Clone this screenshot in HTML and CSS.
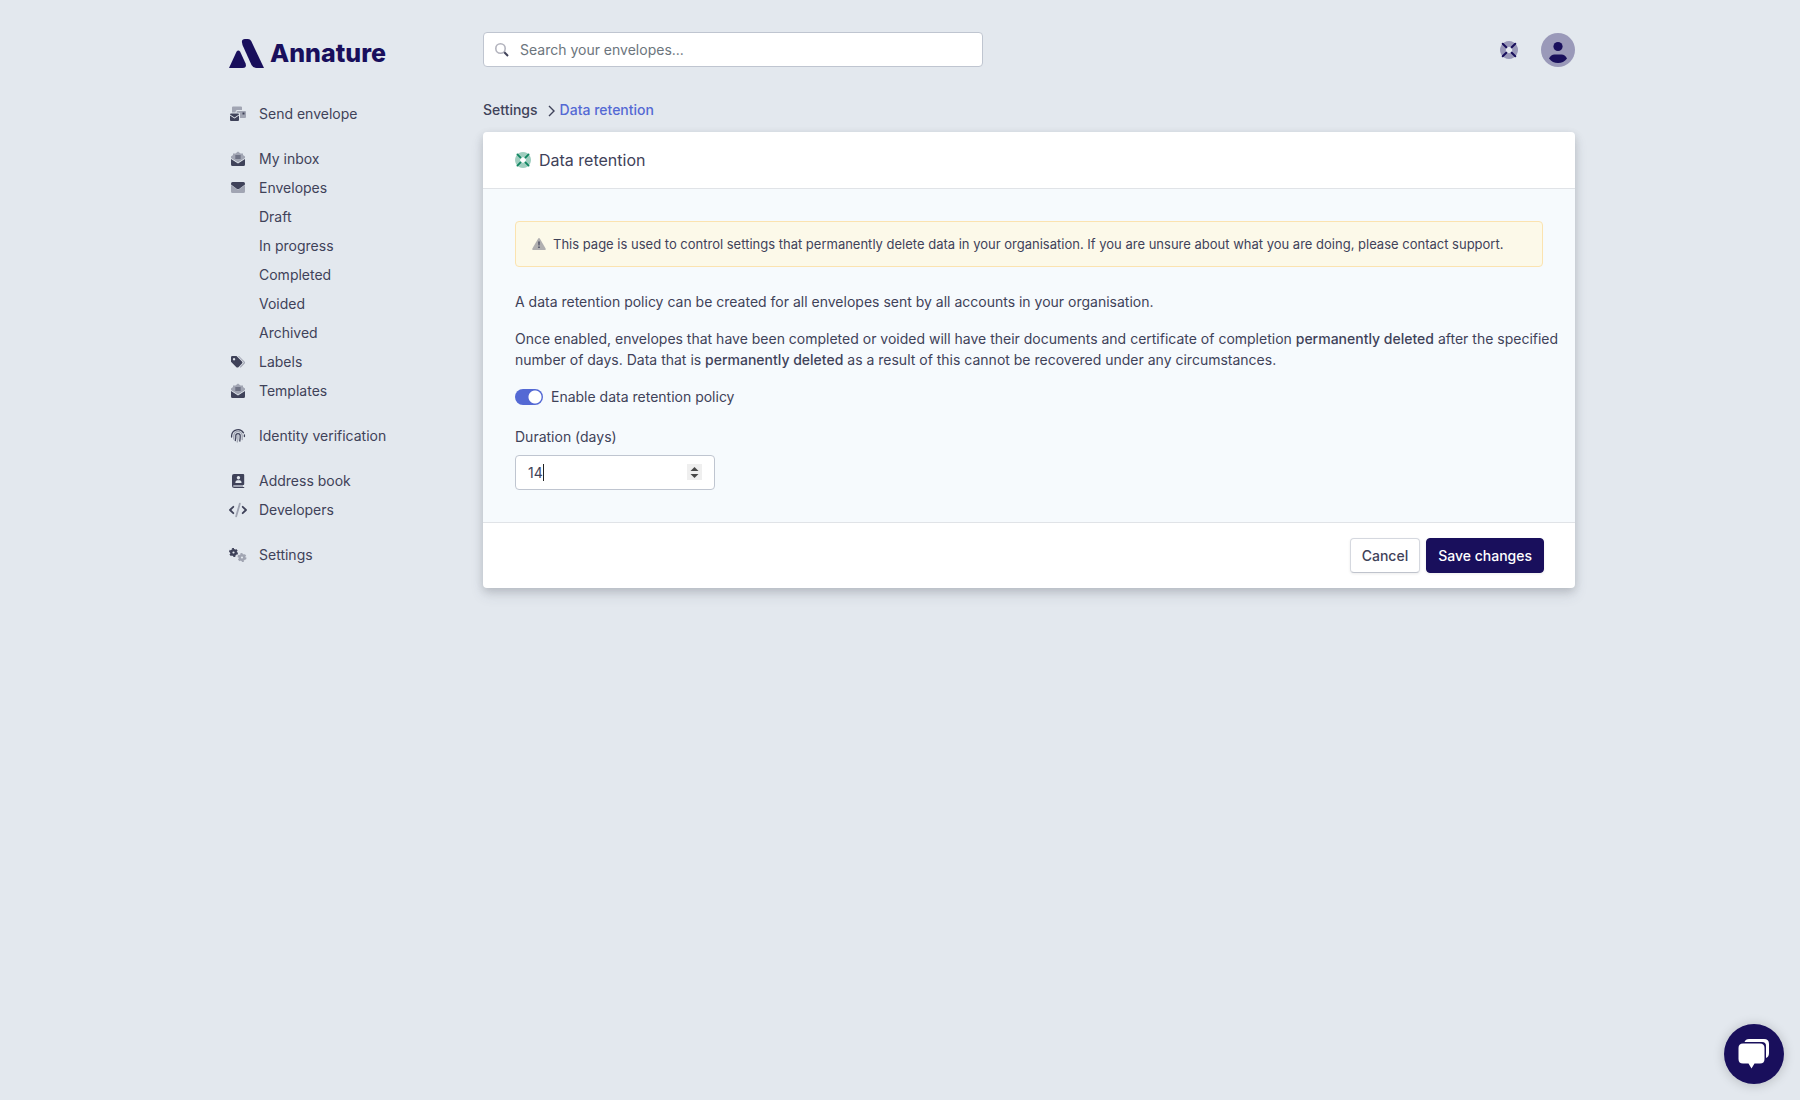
FILE: index.html
```html
<!DOCTYPE html>
<html lang="en">

<head>
    <meta charset="utf-8">
    <title>Data retention - Annature</title>
    <link rel="stylesheet" href="styles.css">
</head>

<body>
    <div class="container">
        <aside class="sidebar">
            <a class="logo" href="#">
                <svg class="logo-mark" viewBox="0 0 35 29" aria-hidden="true">
                    <path d="M13 3.500Q12.400 0 16 0H19Q21.200 0 22.200 2L35 29H27.500Q24 29 22.500 26L13.500 6Z" />
                    <path d="M0 29L7.500 12.800Q9.300 10 11.200 12.800L16.600 24.500Q18 29 13.500 29Z" />
                </svg>
                <span>Annature</span>
            </a>
            <nav>
                <ul class="nav">
                    <li class="gap"><a href="#">
                        <svg class="icon" viewBox="0 0 18 16" aria-hidden="true">
                            <path class="soft" d="M3 1.500Q3 .5 4 .5H12Q13 .5 13 1.500V4H8Q6.500 4 6.500 6.500H3Z" />
                            <path class="soft" d="M8.500 5H16Q17 5 17 6V11Q17 12 16 12H11V8Q11 6.800 10 6.800H7.500V6Q7.500 5 8.500 5Z" />
                            <path d="M13.500 6.500h2v2h-2z" />
                            <path d="M2 7.500H9Q10 7.500 10 8.500L5.500 11.500L1 8.500Q1 7.500 2 7.500ZM1 9.600L5.500 12.600L10 9.600V14Q10 15 9 15H2Q1 15 1 14Z" />
                        </svg>Send envelope</a></li>
                    <li><a href="#">
                        <svg class="icon" viewBox="0 0 18 16" aria-hidden="true">
                            <path class="soft" d="M4 2.500H6.500L9 .5L11.500 2.500H14V4L16 5.500V7L9 11.500L2 7V5.500L4 4Z" />
                            <path d="M6.300 4.500h5.400v1H6.300zM6.300 6.500h5.400v1H6.300zM2 8L9 12.500L16 8V13.500Q16 15 14.500 15H3.500Q2 15 2 13.500Z" />
                        </svg>My inbox</a></li>
                    <li><a href="#">
                        <svg class="icon" viewBox="0 0 18 16" aria-hidden="true">
                            <path class="soft" d="M2 5L9 10L16 5V11.500Q16 13 14.500 13H3.500Q2 13 2 11.500Z" />
                            <path d="M3.500 2H14.500Q16 2 16 3.500V4.500L10 9Q9 9.600 8 9L2 4.500V3.500Q2 2 3.500 2Z" />
                        </svg>Envelopes</a></li>
                    <li class="sub"><a href="#">Draft</a></li>
                    <li class="sub"><a href="#">In progress</a></li>
                    <li class="sub"><a href="#">Completed</a></li>
                    <li class="sub"><a href="#">Voided</a></li>
                    <li class="sub"><a href="#">Archived</a></li>
                    <li><a href="#">
                        <svg class="icon" viewBox="0 0 18 16" aria-hidden="true">
                            <path class="soft" d="M9 2H10L15.700 7.700Q16.500 8.600 15.700 9.500L11.500 13.700L10.800 13L14.500 9Q15 8.500 14.500 8Z" />
                            <path fill-rule="evenodd" d="M2 3.300Q2 2 3.300 2H7.500L13 7.500Q14 8.600 13 9.600L9.400 13.200Q8.400 14 7.400 13.200L2 7.800ZM5 4a1.200 1.200 0 1 0 .1 0z" />
                        </svg>Labels</a></li>
                    <li class="gap"><a href="#">
                        <svg class="icon" viewBox="0 0 18 16" aria-hidden="true">
                            <path class="soft" d="M4 2.500H6.500L9 .5L11.500 2.500H14V4L16 5.500V7L9 11.500L2 7V5.500L4 4Z" />
                            <path d="M6.300 4.500h5.400v1H6.300zM6.300 6.500h5.400v1H6.300zM2 8L9 12.500L16 8V13.500Q16 15 14.500 15H3.500Q2 15 2 13.500Z" />
                        </svg>Templates</a></li>
                    <li class="gap"><a href="#">
                        <svg class="icon line" viewBox="0 0 18 16" aria-hidden="true">
                            <path d="M2.600 9V7.500A6.400 6.400 0 0 1 14.500 4.800M15.400 6.800V8.500" />
                            <path class="soft" d="M4.800 11V7.500A4.200 4.200 0 0 1 9 3.500A4.200 4.200 0 0 1 13.200 7.500V11.500M9 7.500Q9.200 11 8.200 14" />
                            <path d="M6.300 12.500Q7 10 6.800 7.800A2.200 2.200 0 0 1 11.200 7.800Q11.300 10.500 10.800 13" />
                        </svg>Identity verification</a></li>
                    <li><a href="#">
                        <svg class="icon" viewBox="0 0 18 16" aria-hidden="true">
                            <path class="soft" d="M4.500 12H14V14H4.500Z" />
                            <path fill-rule="evenodd" d="M5 1H14.200Q15.200 1 15.200 2V11Q15.200 11.700 14.700 12H5Q4.300 12 4.300 13T5 14H15.200V15H5.500Q3 15 3 12.500V3Q3 1 5 1ZM9.400 3A1.700 1.700 0 1 0 9.500 3ZM6.300 10H12.600Q12.600 7.300 10.800 7.300H8.100Q6.300 7.300 6.300 10Z" />
                        </svg>Address book</a></li>
                    <li class="gap"><a href="#">
                        <svg class="icon line code" viewBox="0 0 18 16" aria-hidden="true">
                            <path class="soft" d="M10.800 1.700L7.200 14.300" />
                            <path d="M4.300 4.800L1 8L4.300 11.200M13.700 4.800L17 8L13.700 11.200" />
                        </svg>Developers</a></li>
                    <li><a href="#">
                        <svg class="icon cogs" viewBox="0 0 18 16" aria-hidden="true">
                            <circle cx="4.500" cy="5.500" r="2.300" />
                            <circle class="teeth" cx="4.500" cy="5.500" r="3.700" />
                            <g class="soft">
                                <circle cx="13" cy="10.500" r="2.300" />
                                <circle class="teeth" cx="13" cy="10.500" r="3.700" />
                            </g>
                        </svg>Settings</a></li>
                </ul>
            </nav>
        </aside>

        <main class="main">
            <header class="topbar">
                <div class="search">
                    <svg class="search-icon" viewBox="0 0 14 14" aria-hidden="true">
                        <circle cx="5.500" cy="5.500" r="4.700" />
                        <path d="M9.300 9.300L13 13" />
                    </svg>
                    <input type="search" aria-label="Search" placeholder="Search your envelopes...">
                </div>
                <div class="actions">
                    <button class="plain" aria-label="Help">
                        <svg class="ring" viewBox="0 0 18 18" aria-hidden="true">
                            <path class="soft" fill-rule="evenodd" d="M9 0A9 9 0 1 0 9.010 0ZM9 5.800A3.200 3.200 0 1 1 8.990 5.800Z" />
                            <path class="spokes" d="M2.700 2.700L6.300 6.300M15.300 2.700L11.700 6.300M2.700 15.300L6.300 11.700M15.300 15.300L11.700 11.700" />
                        </svg>
                    </button>
                    <button class="plain" aria-label="Account">
                        <svg class="avatar" viewBox="0 0 34 34" aria-hidden="true">
                            <circle class="soft" cx="17" cy="17" r="17" />
                            <circle cx="17" cy="13.500" r="4.600" />
                            <path d="M8 25.500Q10 21.500 13.500 21.500H20.500Q24 21.500 26 25.500Q22.500 30 17 30T8 25.500Z" />
                        </svg>
                    </button>
                </div>
            </header>

            <div class="breadcrumb">
                <a href="#">Settings</a>
                <svg viewBox="0 0 7 12" aria-hidden="true"><path d="M1 1L6 6L1 11" /></svg>
                <a class="current" href="#">Data retention</a>
            </div>

            <form class="card">
                <div class="card-header">
                    <svg class="ring" viewBox="0 0 18 18" aria-hidden="true">
                        <path class="soft" fill-rule="evenodd" d="M9 0A9 9 0 1 0 9.010 0ZM9 5.800A3.200 3.200 0 1 1 8.990 5.800Z" />
                        <path class="spokes" d="M2.700 2.700L6.300 6.300M15.300 2.700L11.700 6.300M2.700 15.300L6.300 11.700M15.300 15.300L11.700 11.700" />
                    </svg>
                    <h1>Data retention</h1>
                </div>
                <div class="card-body">
                    <div class="alert">
                        <svg viewBox="0 0 14 12" aria-hidden="true">
                            <path class="soft" d="M6.200 .5Q7 -.4 7.800 .5L13.600 10.500Q14 12 12.800 12H1.200Q0 12 .4 10.500Z" />
                            <path d="M6.300 3.500H7.700L7.500 7.500H6.500ZM6.300 8.500H7.700V10H6.300Z" />
                        </svg>
                        <span>This page is used to control settings that permanently delete data in your organisation. If you are unsure about what you are doing, please contact support.</span>
                    </div>
                    <p>A data retention policy can be created for all envelopes sent by all accounts in your organisation.</p>
                    <p>Once enabled, envelopes that have been completed or voided will have their documents and certificate of completion <strong>permanently deleted</strong> after the specified number of days. Data that is <strong>permanently deleted</strong> as a result of this cannot be recovered under any circumstances.</p>
                    <div class="switch">
                        <input type="checkbox" id="enabled" checked>
                        <label for="enabled">Enable data retention policy</label>
                    </div>
                    <label class="field-label" for="duration">Duration (days)</label>
                    <div class="field">
                        <input type="number" id="duration" value="14">
                        <span class="caret"></span>
                        <svg class="spinner" viewBox="0 0 15 16" aria-hidden="true">
                            <path d="M3.500 7L7.500 3L11.500 7ZM3.500 10H11.500L7.500 14Z" />
                        </svg>
                    </div>
                </div>
                <div class="card-footer">
                    <button type="button" class="btn">Cancel</button>
                    <button type="submit" class="btn primary">Save changes</button>
                </div>
            </form>
        </main>
    </div>

    <button class="chat" aria-label="Open chat">
        <svg viewBox="0 0 32 30" aria-hidden="true">
            <path d="M6.500 3Q7.500 0 11 0H26Q31 0 31 5V14Q31 18 28 19V7Q28 3 24 3Z" />
            <path d="M5 4.500H22Q26.500 4.500 26.500 9V20Q26.500 24.500 22 24.500H16.500L13.500 29.500L10.500 24.500H5Q.5 24.500 .5 20V9Q.5 4.500 5 4.500Z" />
        </svg>
    </button>
</body>

</html>
```

FILE: styles.css
```css
* {
    box-sizing: border-box;
}

body {
    margin: 0;
    min-height: 100vh;
    font-family: Inter, sans-serif;
    font-size: 14px;
    line-height: 21px;
    color: #3f4259;
    background-color: #e3e8ee;
}

a {
    color: inherit;
    text-decoration: none;
}

input,
button {
    font: inherit;
    color: inherit;
}

button {
    cursor: pointer;
}

svg {
    display: block;
    flex: none;
    fill: currentColor;
}

.soft {
    opacity: 0.4;
}

.container {
    display: flex;
    max-width: 1350px;
    margin: 0 auto;
}

.sidebar {
    flex: 0 0 258px;
    padding: 38px 0 0 4px;
}

.logo {
    display: flex;
    align-items: center;
    gap: 6px;
    height: 30px;
    margin-bottom: 31px;
    font-size: 25px;
    font-weight: 800;
    color: #190f5c;
}

.logo-mark {
    width: 35px;
    height: 29px;
}

.nav {
    margin: 0;
    padding: 0;
    list-style: none;
}

.nav a {
    display: flex;
    align-items: center;
    gap: 12px;
    height: 29px;
}

.nav .gap {
    margin-bottom: 16px;
}

.nav .sub {
    padding-left: 30px;
}

.icon {
    width: 18px;
    height: 16px;
}

.line {
    fill: none;
    stroke: currentColor;
    stroke-width: 1.3;
    stroke-linecap: round;
}

.code {
    stroke-width: 1.8;
    stroke-linejoin: round;
}

.cogs circle {
    fill: none;
    stroke: currentColor;
    stroke-width: 2.4;
}

.cogs .teeth {
    stroke-width: 1.6;
    stroke-dasharray: 2 1.870;
}

.main {
    flex: 1;
    min-width: 0;
    padding-top: 32px;
    padding-bottom: 32px;
}

.topbar {
    display: flex;
    justify-content: space-between;
    align-items: center;
    height: 35px;
}

.search {
    position: relative;
    width: 500px;
}

.search input {
    width: 100%;
    height: 35px;
    padding: 0 12px 0 36px;
    border: 1px solid #bfc5d0;
    border-radius: 4px;
    background-color: #fff;
}

.search input::placeholder {
    color: #6c757d;
}

.search-icon {
    position: absolute;
    top: 11px;
    left: 12px;
    width: 14px;
    height: 14px;
    fill: none;
    stroke: currentColor;
    stroke-width: 1.6;
}

.search-icon circle {
    opacity: 0.4;
}

.search-icon path {
    stroke-width: 2;
}

.actions {
    display: flex;
    align-items: center;
    gap: 23px;
}

.plain {
    padding: 0;
    border: none;
    background: none;
    color: #190f5c;
}

.ring {
    width: 18px;
    height: 18px;
}

.spokes {
    stroke: currentColor;
    stroke-width: 2;
    stroke-linecap: round;
}

.avatar {
    width: 34px;
    height: 34px;
}

.plain .soft {
    opacity: 0.36;
}

.breadcrumb {
    display: flex;
    align-items: center;
    margin: 32px 0 12px;
    font-weight: 500;
}

.breadcrumb svg {
    width: 7px;
    height: 12px;
    margin: 2px 5px 0 10px;
    fill: none;
    stroke: currentColor;
    stroke-width: 1.4;
}

.breadcrumb .current {
    color: #5469d4;
}

.card {
    border-radius: 4px;
    background-color: #fff;
    box-shadow: 0 7px 14px rgba(60, 66, 87, 0.12), 0 3px 8px rgba(0, 0, 0, 0.14);
}

.card-header {
    display: flex;
    align-items: center;
    gap: 8px;
    height: 57px;
    padding: 0 32px;
    border-bottom: 1px solid #e0e3e7;
}

.card-header .ring {
    width: 16px;
    height: 16px;
    color: #0e8560;
}

.card-header h1 {
    margin: 0;
    font-size: 16px;
    font-weight: 400;
}

.card-body {
    padding: 32px;
    background-color: #f6fafd;
}

.alert {
    display: flex;
    align-items: center;
    gap: 7px;
    min-height: 46px;
    margin-bottom: 24px;
    padding: 0 16px;
    border: 1px solid #fbe3b0;
    border-radius: 4px;
    background-color: #fcf9e9;
    font-size: 13px;
}

.alert svg {
    width: 14px;
    height: 12px;
}

p {
    margin: 0 -24px 16px 0;
}

strong {
    font-weight: 500;
}

.switch {
    display: flex;
    align-items: center;
    gap: 8px;
    margin-bottom: 19px;
}

.switch input {
    appearance: none;
    width: 28px;
    height: 16px;
    margin: 0;
    border-radius: 8px;
    background: radial-gradient(circle at 20px 8px, #fff 6px, #5469d4 7px);
}

.field-label {
    display: block;
    margin-bottom: 8px;
}

.field {
    position: relative;
    width: 200px;
}

.field input {
    display: block;
    width: 100%;
    height: 35px;
    padding: 0 12px;
    border: 1px solid #bfc5d0;
    border-radius: 4px;
    background-color: #fff;
}

.field input::-webkit-inner-spin-button {
    opacity: 0;
}

.caret {
    position: absolute;
    top: 9px;
    left: 28px;
    width: 1px;
    height: 17px;
    background-color: #222;
}

.spinner {
    position: absolute;
    top: 9px;
    right: 13px;
    width: 15px;
    height: 16px;
    background-color: #efefef;
    color: #484848;
    pointer-events: none;
}

.card-footer {
    display: flex;
    justify-content: flex-end;
    gap: 6px;
    padding: 15px 31px;
    border-top: 1px solid #e0e3e7;
}

.btn {
    height: 35px;
    padding: 0 11px;
    border: 1px solid #d5d8df;
    border-bottom-color: #bfc3cc;
    border-radius: 4px;
    background-color: #fff;
    box-shadow: 0 1px 3px rgba(0, 0, 0, 0.08);
    font-weight: 500;
}

.primary {
    border-color: #190f5c;
    background-color: #190f5c;
    color: #fff;
}

.chat {
    position: fixed;
    right: 16px;
    bottom: 16px;
    display: flex;
    align-items: center;
    justify-content: center;
    width: 60px;
    height: 60px;
    border: none;
    border-radius: 50%;
    background-color: #190f5c;
    box-shadow: 0 1px 12px rgba(0, 0, 0, 0.2);
    color: #fff;
}

.chat svg {
    width: 32px;
    height: 30px;
}
```
